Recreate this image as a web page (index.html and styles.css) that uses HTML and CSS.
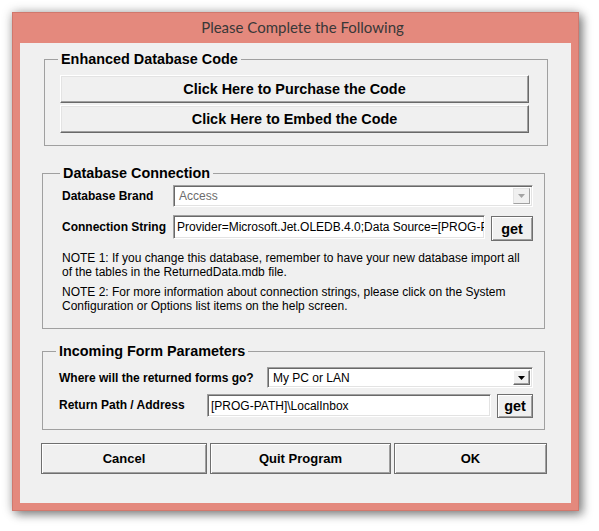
FILE: index.html
```html
<!DOCTYPE html>
<html>
<head>
<meta charset="utf-8">
<link rel="stylesheet" href="styles.css">
</head>
<body>
<div class="window">
  <div class="titlebar">Please Complete the Following</div>
  <div class="client">
    <fieldset class="group g1">
      <legend>Enhanced Database Code</legend>
      <button class="btn raised wide">Click Here to Purchase the Code</button>
      <button class="btn raised wide second">Click Here to Embed the Code</button>
    </fieldset>

    <fieldset class="group g2">
      <legend>Database Connection</legend>
      <div class="row row-brand">
        <span class="label lbl-db">Database Brand</span>
        <div class="combo combo-db disabled">
          <span class="combo-text">Access</span>
          <span class="drop"><svg width="7" height="4" viewBox="0 0 7 4"><path d="M0 0H7L3.5 4Z" fill="#a3a3a3"/></svg></span>
        </div>
      </div>
      <div class="row row-conn">
        <span class="label lbl-db">Connection String</span>
        <div class="field field-conn"><span class="clip">Provider=Microsoft.Jet.OLEDB.4.0;Data Source=[PROG-P</span></div>
        <button class="btn framed get get-conn">get</button>
      </div>
      <p class="note note1">NOTE 1: If you change this database, remember to have your new database import all of the tables in the ReturnedData.mdb file.</p>
      <p class="note note2">NOTE 2: For more information about connection strings, please click on the System Configuration or Options list items on the help screen.</p>
    </fieldset>

    <fieldset class="group g3">
      <legend>Incoming Form Parameters</legend>
      <div class="row row-where">
        <span class="label lbl-where">Where will the returned forms go?</span>
        <div class="combo combo-where">
          <span class="combo-text">My PC or LAN</span>
          <span class="drop drop-on"><svg width="7" height="4" viewBox="0 0 7 4"><path d="M0 0H7L3.5 4Z" fill="#000"/></svg></span>
        </div>
      </div>
      <div class="row row-path">
        <span class="label lbl-path">Return Path / Address</span>
        <div class="field field-path">[PROG-PATH]\LocalInbox</div>
        <button class="btn framed get get-path">get</button>
      </div>
    </fieldset>

    <div class="actions">
      <button class="btn framed act act-cancel">Cancel</button>
      <button class="btn framed act act-quit">Quit Program</button>
      <button class="btn framed act act-ok">OK</button>
    </div>
  </div>
</div>
</body>
</html>
```

FILE: styles.css
```css
* { box-sizing: border-box; }
html, body { margin: 0; padding: 0; background: #ffffff; }
body { font-family: "Liberation Sans", Arial, sans-serif; color: #000; min-height: 531px; padding-top: 12px; }

.window {
  margin: 0 0 0 12px;
  width: 567px;
  height: 499px;
  background: #e4897d;
  border: 1px solid #d0786d;
  padding: 0 7px 7px 7px;
  box-shadow: 0 0 10px rgba(0,0,0,0.28), 4px 4px 9px rgba(0,0,0,0.38);
  display: flex;
  flex-direction: column;
}
.titlebar {
  height: 30px;
  line-height: 29px;
  text-align: center;
  font-family: "Lato", "Open Sans", sans-serif;
  font-size: 15px;
  color: #383838;
  padding-left: 14px;
}
.client {
  flex: 1;
  background: #f0f0f0;
  padding: 8px 0 0 0;
  display: flex;
  flex-direction: column;
}

.group {
  margin: 0;
  border: 1px solid #a0a0a0;
  min-width: 0;
}
.group legend {
  font-size: 14.4px;
  font-weight: bold;
  line-height: 16px;
  padding: 0 3px;
  color: #000;
}

.g1 { margin-left: 24px; width: 504px; padding: 8px 18px 12px 15px; }
.g1 legend { margin-left: -2px; }
.g2 { margin: 19px 0 0 22px; width: 503px; padding: 4px 11px 15px 19px; }
.g2 legend { margin-left: -2px; }
.g3 { margin: 14px 0 0 22px; width: 503px; padding: 8px 11px 11px 16px; }
.g3 legend { margin-left: -3px; }

.btn {
  font-family: "Liberation Sans", Arial, sans-serif;
  font-weight: bold;
  color: #000;
  background: #f0f0f0;
  margin: 0;
  padding: 0;
  display: flex;
  align-items: center;
  justify-content: center;
}
.raised {
  border: 1px solid;
  border-color: #ffffff #696969 #696969 #ffffff;
  box-shadow: inset -1px -1px 0 #a0a0a0, inset 1px 1px 0 #e3e3e3;
}
.framed {
  border: 1px solid #6f6f6f;
  box-shadow: inset 1px 1px 0 #ffffff, inset -1px -1px 0 #a0a0a0;
}
.wide { width: 469px; height: 28px; font-size: 14.4px; }
.wide.second { margin-top: 2px; }

.row { display: flex; align-items: center; }
.label { font-size: 12px; font-weight: bold; white-space: nowrap; }
.lbl-db { width: 111px; }
.lbl-where { width: 208px; }
.lbl-path { width: 148px; }
.row-brand { height: 22px; }
.row-conn { height: 26px; margin-top: 8px; align-items: flex-start; }
.row-conn .label { line-height: 24px; }
.row-where { height: 21px; }
.row-path { height: 24px; margin-top: 6px; align-items: flex-start; }
.row-path .label { line-height: 23px; }

.field, .combo {
  background: #ffffff;
  border: 1px solid;
  border-color: #a0a0a0 #ffffff #ffffff #a0a0a0;
  box-shadow: inset 1px 1px 0 #696969, inset -1px -1px 0 #e3e3e3;
  font-size: 12px;
  white-space: nowrap;
  overflow: hidden;
}
.field { padding: 0 0 0 3px; display: flex; align-items: center; }
.clip { display: block; overflow: hidden; width: 100%; }
.field-conn { width: 312px; height: 24px; }
.field-path { width: 284px; height: 23px; }
.get { font-size: 14.4px; margin-left: 6px; }
.get-conn { width: 42px; height: 25px; margin-top: 1px; }
.get-path { width: 36px; height: 24px; }

.combo { display: flex; align-items: center; justify-content: space-between; padding: 2px 2px 2px 5px; }
.combo-db { width: 360px; height: 22px; }
.combo-where { width: 266px; height: 21px; }
.disabled .combo-text { color: #6d6d6d; }
.drop {
  width: 17px;
  height: 100%;
  display: flex;
  align-items: center;
  justify-content: center;
  background: #f0f0f0;
  border: 1px solid;
  border-color: #e3e3e3 #a0a0a0 #a0a0a0 #e3e3e3;
}
.drop-on {
  border-color: #ffffff #696969 #696969 #ffffff;
  box-shadow: inset -1px -1px 0 #a0a0a0;
}

.note {
  margin: 0;
  font-size: 12px;
  line-height: 14px;
  width: 468px;
}
.note1 { margin-top: 10px; }
.note2 { margin-top: 6px; }

.actions { display: flex; gap: 3px; margin: 13px 0 0 21px; }
.act { height: 31px; font-size: 13px; }
.act-cancel { width: 166px; }
.act-quit { width: 181px; }
.act-ok { width: 153px; }
```
